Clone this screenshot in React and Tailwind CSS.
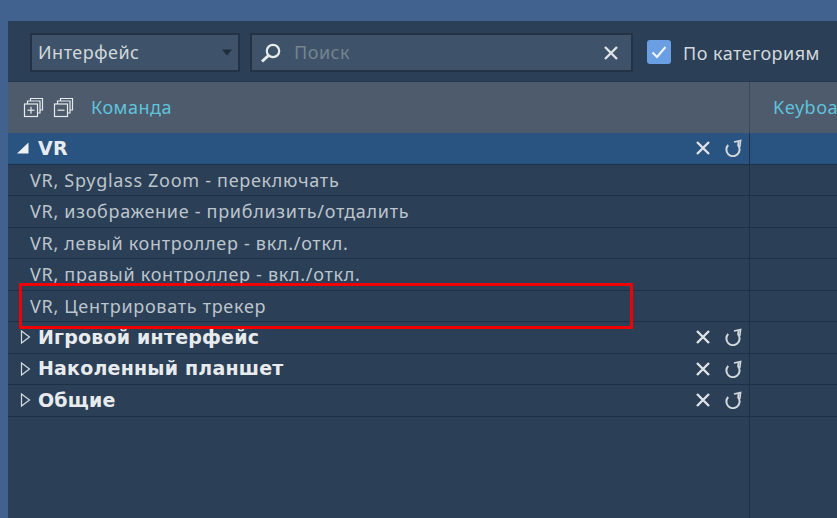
const font = { fontFamily: '"Noto Sans", sans-serif' };

function X({ size = 16, className = "" }) {
  return (
    <svg width={size} height={size} viewBox="0 0 16 16" className={className}>
      <path d="M2 2 L14 14 M14 2 L2 14" stroke="#dfe3e6" strokeWidth="2.4" fill="none" />
    </svg>
  );
}

function Undo() {
  return (
    <svg width="18" height="18" viewBox="0 0 18 18" fill="none" stroke="#d3d8dc">
      <path d="M4.2 6 A6.6 6.6 0 1 0 14.2 6.5 L14.6 2.5" strokeWidth="2" />
      <path d="M10 3 L16.6 1.6 L15.8 8" strokeWidth="1.6" />
    </svg>
  );
}

function Stack({ minus }) {
  return (
    <svg width="21" height="21" viewBox="0 0 21 21" fill="none" stroke="#e6eaec" strokeWidth="1.2">
      <path d="M7.5 4 V1.5 H19.5 V13 H17" />
      <path d="M4.5 7 V4 H17 V16 H14.5" />
      <rect x="1.5" y="7" width="13" height="12.5" fill="#4d5b6c" />
      <path d="M4.5 13.2 H11.5" />
      {!minus && <path d="M8 9.7 V16.7" />}
    </svg>
  );
}

function Actions() {
  return (
    <div className="flex items-center gap-[13px] mr-[7px]">
      <X size={16} />
      <Undo />
    </div>
  );
}

function Category({ open, label, actions = true, highlight }) {
  return (
    <div className={`flex h-[31.5px] border-b border-[#1e3045] ${highlight ? "bg-[#295380]" : ""}`}>
      <div className="w-[742px] flex items-center border-r border-[#1e3045]">
        <svg width="14" height="14" viewBox="0 0 14 14" className="ml-[11px] shrink-0 overflow-visible">
          {open ? (
            <path d="M-2 12.5 L9.5 12.5 L9.5 1.5 Z" fill="#eef1f3" />
          ) : (
            <path d="M2.5 1 L10.5 7 L2.5 13 Z" fill="none" stroke="#d6dbdf" strokeWidth="1.2" />
          )}
        </svg>
        <span className="ml-[5px] text-[19px] font-bold text-[#e8ebed] flex-1 leading-none tracking-[0.2px]" style={{ fontFamily: '"DejaVu Sans", sans-serif' }}>
          {label}
        </span>
        {actions && <Actions />}
      </div>
    </div>
  );
}

function Row({ label }) {
  return (
    <div className="flex h-[31.5px] border-b border-[#1e3045]">
      <div className="w-[742px] flex items-center pl-[22px] pt-[1px] border-r border-[#1e3045] text-[18px] text-[#bdc5cc] tracking-[0.7px]">
        {label}
      </div>
    </div>
  );
}

export default function App() {
  return (
    <div className="relative w-[837px] h-[518px] overflow-hidden bg-[#41628f] pt-[21px] pl-[8px]" style={font}>
      <div className="h-[497px] bg-[#2b3f57] flex flex-col">
        <div className="h-[61px] flex items-start pl-[22px] pt-[12px] shrink-0 border-b border-[#25384e]">
          <div className="w-[210px] h-[39px] bg-[#3e5369] border-2 border-[#223347] flex items-center pl-[6px] pr-[5px] text-[18px] text-[#d3d8dc] tracking-[0.5px]">
            <span className="flex-1">Интерфейс</span>
            <svg width="12" height="7" viewBox="0 0 12 7"><path d="M1 0.5 H11 L6 6.5 Z" fill="#1f2c3a" /></svg>
          </div>
          <div className="ml-[10px] w-[383px] h-[39px] bg-[#3e5369] border-2 border-[#223347] flex items-center pl-[8px] text-[18px] text-[#75858f] tracking-[0.5px]">
            <svg width="22" height="22" viewBox="0 0 22 22" fill="none">
              <circle cx="13" cy="9" r="6.2" stroke="#e8ebed" strokeWidth="2.2" />
              <path d="M8.5 13.5 L2 19.5" stroke="#e8ebed" strokeWidth="3" />
            </svg>
            <span className="ml-[12px] flex-1">Поиск</span>
            <X size={16} className="mr-[12px]" />
          </div>
          <div className="ml-[14px] mt-[7px] w-[24px] h-[24px] rounded-[3px] bg-[#6a9fe4] flex items-center justify-center">
            <svg width="18" height="18" viewBox="0 0 18 18"><path d="M2.5 9.5 L7 14 L15.5 4" stroke="#f4f7fa" strokeWidth="2" fill="none" /></svg>
          </div>
          <span className="ml-[12px] mt-[7px] text-[18px] text-[#d3d8dc] tracking-[0.5px] whitespace-nowrap">По категориям</span>
        </div>
        <div className="h-[51px] flex bg-[#4d5b6c] shrink-0">
          <div className="w-[742px] flex items-center pl-[15px] border-r border-[#3a4a5c]">
            <Stack />
            <span className="w-[9px]" />
            <Stack minus />
            <span className="ml-[17px] text-[18px] text-[#5fc3dd] tracking-[0.5px]">Команда</span>
          </div>
          <div className="flex-1 overflow-hidden flex items-center pl-[23px] text-[18px] text-[#5fc3dd] tracking-[0.5px] whitespace-nowrap">Keyboa</div>
        </div>
        <Category open label="VR" highlight />
        <Row label="VR, Spyglass Zoom - переключать" />
        <Row label="VR, изображение - приблизить/отдалить" />
        <Row label="VR, левый контроллер - вкл./откл." />
        <Row label="VR, правый контроллер - вкл./откл." />
        <Row label="VR, Центрировать трекер" />
        <Category label="Игровой интерфейс" />
        <Category label="Наколенный планшет" />
        <Category label="Общие" />
        <div className="flex-1 flex">
          <div className="w-[742px] border-r border-[#1e3045]" />
        </div>
      </div>
      <div className="absolute left-[19px] top-[283px] w-[614px] h-[46px] border-[3px] border-[#f00000]" />
    </div>
  );
}
